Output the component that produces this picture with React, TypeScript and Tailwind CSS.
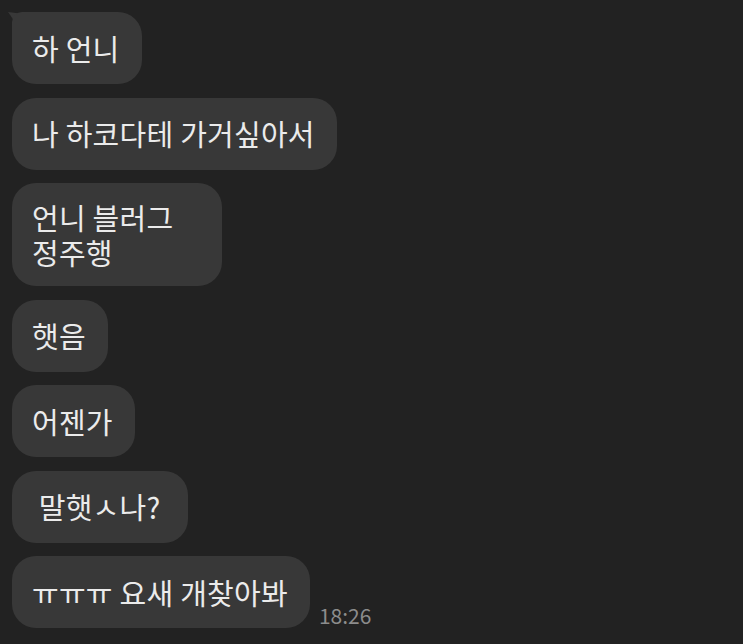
import React from 'react';

const messages: { lines: string[]; extra?: string }[] = [
  { lines: ['하 언니'] },
  { lines: ['나 하코다테 가거싶아서'] },
  { lines: ['언니 블러그', '정주행'], extra: 'min-w-[210px]' },
  { lines: ['햇음'] },
  { lines: ['어젠가'] },
  { lines: ['\u00a0말햇ㅅ나?'], extra: 'min-w-[176px]' },
  { lines: ['ㅠㅠㅠ 요새 개찾아봐'] },
];

const Bubble: React.FC<{ lines: string[]; first?: boolean; extra?: string }> = ({ lines, first, extra }) => (
  <div className="relative">
    {first && (
      <svg className="absolute -left-[4px] top-0" width="24" height="20" viewBox="0 0 24 20">
        <path d="M0 0 L24 3 L14 20 Z" fill="#383838" />
      </svg>
    )}
    <div
      className={`relative bg-[#383838] rounded-[24px] pl-5 pr-[22px] py-[16.5px] min-h-[72px] flex flex-col justify-center text-[29px] leading-[35px] tracking-[0.25px] text-[#ebebeb] ${
        first ? 'rounded-tl-[10px]' : ''
      } ${extra ?? ''}`}
    >
      {lines.map((l, i) => (
        <div key={i} className="whitespace-pre">{l}</div>
      ))}
    </div>
  </div>
);

export default function App() {
  return (
    <div
      className="w-[743px] h-[644px] bg-[#222222] overflow-hidden pl-3 pt-3 flex flex-col gap-[13.5px]"
      style={{ fontFamily: '"Noto Sans CJK KR", "Noto Sans", sans-serif' }}
    >
      {messages.map((m, i) => (
        <div key={i} className="flex items-end gap-[9px]">
          <Bubble lines={m.lines} first={i === 0} extra={m.extra} />
          {i === messages.length - 1 && (
            <span className="text-[21px] leading-[24px] text-[#8c8c8c] pb-[1px]">18:26</span>
          )}
        </div>
      ))}
    </div>
  );
}
